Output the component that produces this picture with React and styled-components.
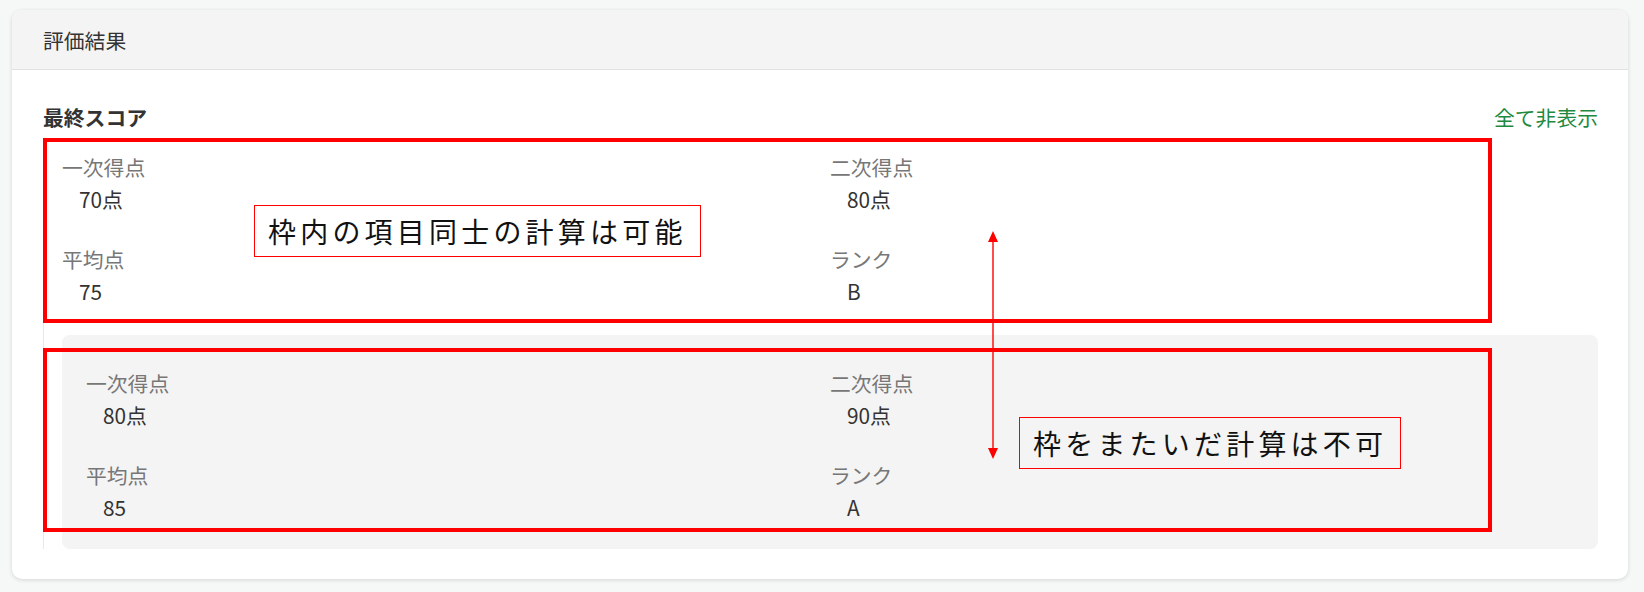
import React from 'react'
import styled, { createGlobalStyle } from 'styled-components'

const GlobalStyle = createGlobalStyle`
  html, body {
    margin: 0;
    padding: 0;
    background: #f6f7f7;
  }
  body {
    font-family: "Noto Sans CJK JP", "Noto Sans", sans-serif;
  }
`

const Page = styled.div`
  position: relative;
  padding: 10px 16px 13px 12px;
  background: #f6f7f7;
`

const Card = styled.section`
  background: #fff;
  border-radius: 10px;
  box-shadow: 0 1px 4px rgba(0, 0, 0, 0.14);
  overflow: hidden;
`

const CardHeader = styled.header`
  box-sizing: border-box;
  height: 60px;
  padding: 0 31px;
  display: flex;
  align-items: center;
  background: #f4f4f4;
  border-bottom: 1px solid #e2e2e2;
  font-size: 20.8px;
  color: #333;
`

const CardBody = styled.div`
  padding: 31px 30px 30px 31px;
`

const HeadingRow = styled.div`
  display: flex;
  justify-content: space-between;
  align-items: center;
  height: 32px;
  margin-bottom: 5px;
`

const Heading = styled.h2`
  margin: 0;
  font-size: 20.8px;
  font-weight: 700;
  color: #333;
`

const ToggleLink = styled.a`
  font-size: 20.8px;
  color: #1f8a3f;
  cursor: pointer;
`

const GroupList = styled.div`
  border-left: 1px solid #e8e8e8;
  padding-left: 18px;
`

const Group = styled.div`
  display: grid;
  grid-template-columns: 1fr 1fr;
  row-gap: 28px;
  padding: ${p => (p.$panel ? '32px 24px 26px' : '13px 0 28px')};
  background: ${p => (p.$panel ? '#f4f4f4' : 'transparent')};
  border-radius: ${p => (p.$panel ? '8px' : '0')};
`

const Item = styled.div`
  font-size: 20.8px;
  line-height: 32px;
`

const Label = styled.div`
  color: #777;
`

const Value = styled.div`
  padding-left: 17px;
  color: #333;
`

const RedFrame = styled.div`
  position: absolute;
  box-sizing: border-box;
  left: 43px;
  top: ${p => p.$top}px;
  width: 1449px;
  height: ${p => p.$height}px;
  border: 4px solid #ff0000;
  pointer-events: none;
`

const Note = styled.div`
  position: absolute;
  left: ${p => p.$left}px;
  top: ${p => p.$top}px;
  height: 50px;
  padding: 0 13px;
  border: 1px solid #ff0000;
  font-size: 28px;
  line-height: 50px;
  letter-spacing: 4.2px;
  color: #111;
  white-space: nowrap;
`

const Arrow = styled.svg`
  position: absolute;
  left: 987px;
  top: 231px;
`

const groups = [
  { panel: false, items: [['一次得点', '70点'], ['二次得点', '80点'], ['平均点', '75'], ['ランク', 'B']] },
  { panel: true, items: [['一次得点', '80点'], ['二次得点', '90点'], ['平均点', '85'], ['ランク', 'A']] },
]

const App = () => {
  return (
    <Page>
      <GlobalStyle />
      <Card>
        <CardHeader>評価結果</CardHeader>
        <CardBody>
          <HeadingRow>
            <Heading>最終スコア</Heading>
            <ToggleLink>全て非表示</ToggleLink>
          </HeadingRow>
          <GroupList>
            {groups.map((g, i) => (
              <Group key={i} $panel={g.panel}>
                {g.items.map(([label, value]) => (
                  <Item key={label}>
                    <Label>{label}</Label>
                    <Value>{value}</Value>
                  </Item>
                ))}
              </Group>
            ))}
          </GroupList>
        </CardBody>
      </Card>

      <RedFrame $top={138} $height={185} />
      <RedFrame $top={348} $height={184} />
      <Note $left={254} $top={205}>枠内の項目同士の計算は可能</Note>
      <Note $left={1019} $top={417}>枠をまたいだ計算は不可</Note>
      <Arrow width="12" height="228" viewBox="0 0 12 228">
        <line x1="6" y1="10" x2="6" y2="218" stroke="#ff0000" strokeWidth="1.4" />
        <polygon points="6,0 11,11 1,11" fill="#ff0000" />
        <polygon points="6,228 11,217 1,217" fill="#ff0000" />
      </Arrow>
    </Page>
  )
}

export default App
